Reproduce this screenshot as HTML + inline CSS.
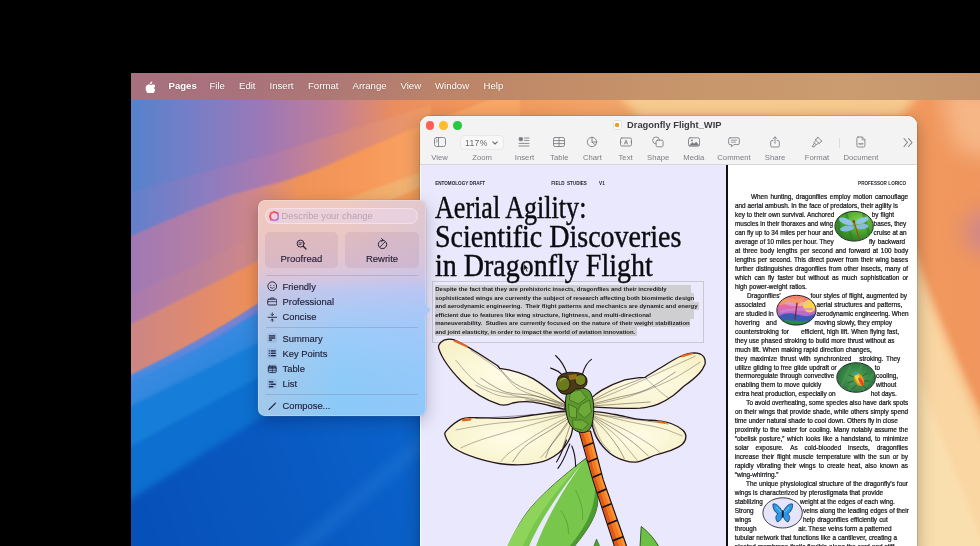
<!DOCTYPE html>
<html>
<head>
<meta charset="utf-8">
<style>
*{margin:0;padding:0;box-sizing:border-box}
html,body{width:980px;height:546px;overflow:hidden;background:#000;font-family:"Liberation Sans",sans-serif}
#win,#pop,#menubar{will-change:transform}
#winin{position:absolute;left:.5px;top:0;width:496.5px;height:100%}
#stage{position:absolute;left:0;top:0;width:980px;height:546px;overflow:hidden;background:#000}
#desk{position:absolute;left:131px;top:73px;width:849px;height:473px;overflow:hidden}
#desk svg{position:absolute;left:0;top:0}
/* menubar */
#menubar{position:absolute;left:131px;top:73px;width:849px;height:26.500px;background:linear-gradient(90deg,#a6707e 0%,#a9727b 12%,#ae7876 24%,#bb8369 36%,#c28c68 50%,#c8976b 68%,#ca9c70 85%,#c6946c 100%)}
#menubar span{position:absolute;top:0;line-height:25.800px;color:#fff;font-size:9.6px;white-space:nowrap;text-shadow:0 0 2px rgba(0,0,0,.25)}
/* window */
#win{position:absolute;left:420px;top:116px;width:497px;height:440px;border-radius:9px 9px 0 0;background:#fff;overflow:hidden;box-shadow:0 0 0 .5px rgba(0,0,0,.22),0 5px 18px rgba(0,0,0,.3)}
#tbar{position:absolute;left:-.5px;top:0;width:497px;height:48.5px;background:#f4f3f4;border-bottom:.8px solid #d8d6da}
.tl{position:absolute;top:5px;width:8.6px;height:8.6px;border-radius:50%}
.tlab{margin-left:.7px;position:absolute;top:36.5px;font-size:7.7px;color:#7d7b80;white-space:nowrap;transform:translateX(-50%);line-height:9px}
.tico{margin-left:.7px;position:absolute;top:20px;transform:translateX(-50%)}
#lpage{position:absolute;left:0;top:49px;width:305.5px;height:400px;background:#e9e8fc}
#divider{position:absolute;left:305px;top:49px;width:2px;height:400px;background:#111}
#rpage{position:absolute;left:307px;top:49px;width:190px;height:400px;background:#fff}
/* popup */
#pop{position:absolute;left:258px;top:200px;width:167.5px;height:215.5px;border-radius:7px;background:linear-gradient(90deg,rgba(245,195,180,.22) 0%,rgba(220,200,220,0) 50%,rgba(170,190,255,.2) 100%),linear-gradient(180deg,#efcac1 0%,#ebc8c5 14%,#e2c6d2 28%,#d4c6e2 36%,#bcc7f0 42%,#a9caf6 52%,#9ccbf8 62%,#8fcbf9 80%,#8ac9f9 100%);box-shadow:inset 0 0 0 .7px rgba(255,255,255,.3),0 0 0 .5px rgba(120,120,150,.3),0 5px 16px rgba(0,0,30,.25)}
.pi{-webkit-text-stroke:.15px currentColor;position:absolute;left:24.5px;font-size:9.4px;color:#23233c;white-space:nowrap;line-height:12px}
.psep{position:absolute;left:8px;width:152px;height:.8px;background:rgba(110,110,140,.28)}
.pico{position:absolute;left:8px}

.hd{position:absolute;font-size:4.600px;font-weight:bold;color:#26252c;line-height:6px;white-space:nowrap;text-align:justify;text-align-last:justify;letter-spacing:0}
.ttl{-webkit-text-stroke:.45px #0c0c10;position:absolute;z-index:2;font-family:"Liberation Serif",serif;font-size:32.500px;line-height:1;color:#0c0c10;white-space:nowrap;transform-origin:0 0;letter-spacing:0}
.pb{position:absolute;font-size:6.030px;font-weight:bold;color:#1c1c22;line-height:8px;white-space:nowrap;text-align:justify;text-align-last:justify;overflow:visible}
.rt{position:absolute;font-size:6.400px;color:#18181c;line-height:9px;white-space:nowrap;text-align:justify;text-align-last:justify;-webkit-text-stroke:.22px #18181c}
</style>
</head>
<body>
<div id="stage">
<div id="desk">
<svg width="849" height="473" viewBox="131 73 849 473">
<defs>
<linearGradient id="g0" x1="131" y1="0" x2="980" y2="0" gradientUnits="userSpaceOnUse">
<stop offset="0" stop-color="#5682cc"/><stop offset=".08" stop-color="#7a7ec6"/><stop offset=".155" stop-color="#9c78b6"/><stop offset=".235" stop-color="#bf7e9a"/><stop offset=".31" stop-color="#ea8e60"/><stop offset=".4" stop-color="#f3965a"/><stop offset=".55" stop-color="#f3a468"/><stop offset=".75" stop-color="#f4a466"/><stop offset=".9" stop-color="#f29a5e"/><stop offset="1" stop-color="#f0965e"/>
</linearGradient>
<linearGradient id="g1" x1="131" y1="0" x2="431" y2="0" gradientUnits="userSpaceOnUse">
<stop offset="0" stop-color="#6280cc"/><stop offset=".25" stop-color="#8c7cc0"/><stop offset=".47" stop-color="#ae7aac"/><stop offset=".72" stop-color="#d6887e"/><stop offset="1" stop-color="#f29c62"/>
</linearGradient>
<linearGradient id="g2" x1="131" y1="0" x2="431" y2="0" gradientUnits="userSpaceOnUse">
<stop offset="0" stop-color="#a079b4"/><stop offset=".22" stop-color="#b47ea4"/><stop offset=".42" stop-color="#d08888"/><stop offset=".56" stop-color="#f09358"/><stop offset=".78" stop-color="#f6995a"/><stop offset="1" stop-color="#f9a666"/>
</linearGradient>
<linearGradient id="g3" x1="131" y1="0" x2="431" y2="0" gradientUnits="userSpaceOnUse">
<stop offset="0" stop-color="#aa7aae"/><stop offset=".25" stop-color="#be8298"/><stop offset=".43" stop-color="#d28a84"/><stop offset=".62" stop-color="#ee965e"/><stop offset=".75" stop-color="#f3aa68"/><stop offset="1" stop-color="#f0b676"/>
</linearGradient>
<linearGradient id="g4" x1="131" y1="0" x2="431" y2="0" gradientUnits="userSpaceOnUse">
<stop offset="0" stop-color="#cc8684"/><stop offset=".2" stop-color="#de8a72"/><stop offset=".42" stop-color="#f09058"/><stop offset="1" stop-color="#f6a05a"/>
</linearGradient>
<linearGradient id="g5" x1="170" y1="330" x2="300" y2="546" gradientUnits="userSpaceOnUse">
<stop offset="0" stop-color="#5a8fe2"/><stop offset=".1" stop-color="#3a8ae0"/><stop offset=".3" stop-color="#2484dc"/><stop offset="1" stop-color="#2484dc"/>
</linearGradient>
<linearGradient id="gpb" x1="131" y1="0" x2="431" y2="0" gradientUnits="userSpaceOnUse"><stop offset="0" stop-color="#5a8ce0" stop-opacity=".3"/><stop offset=".25" stop-color="#7a82d4"/><stop offset=".5" stop-color="#8e80cc"/><stop offset="1" stop-color="#9a86d0"/></linearGradient>
<filter color-interpolation-filters="sRGB" id="b1" x="-5%" y="-5%" width="110%" height="110%"><feGaussianBlur stdDeviation="0.8"/></filter>
<linearGradient id="g6" x1="131" y1="546" x2="421" y2="440" gradientUnits="userSpaceOnUse"><stop offset="0" stop-color="#0650b8"/><stop offset=".55" stop-color="#0959c1"/><stop offset="1" stop-color="#0b63cb"/></linearGradient>
<filter color-interpolation-filters="sRGB" id="b2" x="-5%" y="-5%" width="110%" height="110%"><feGaussianBlur stdDeviation="1.6"/></filter>
<filter color-interpolation-filters="sRGB" id="b3" x="-5%" y="-5%" width="110%" height="110%"><feGaussianBlur stdDeviation="3"/></filter>
<filter color-interpolation-filters="sRGB" id="b4" x="-10%" y="-10%" width="120%" height="120%"><feGaussianBlur stdDeviation="5"/></filter>
<filter color-interpolation-filters="sRGB" id="b8" x="-10%" y="-10%" width="120%" height="120%"><feGaussianBlur stdDeviation="10"/></filter>
</defs>
<rect x="100" y="40" width="900" height="540" fill="url(#g0)"/>
<g filter="url(#b1)">
<polygon points="100,201 131,192 271,154 431,105 431,560 100,560" fill="url(#g1)"/>
<path d="M100,250 L131,236 C170,219 200,206 231,195 C255,188 275,184 292,178.600 C320,169 340,160 353,154 C380,142 400,134 421,125.500 L520,88 L520,560 L100,560Z" fill="url(#g2)"/>
<path d="M100,311 L131,296 L258,235 Q300,216 345,199 L421,172.500 L470,156 L470,560 L100,560Z" fill="url(#g3)"/>
<polygon points="100,340 131,324 258,261 431,182 431,560 100,560" fill="url(#g4)"/>
<path d="M100,394 L131,375 Q200,342 258,304 L431,200 L431,580 L100,580 Z" fill="url(#g5)"/>
</g>
<clipPath id="cpb"><path d="M100,394 L131,375 Q200,342 258,304 L431,200 L431,580 L100,580 Z"/></clipPath>
<g clip-path="url(#cpb)"><path d="M100,394 L131,375 Q200,342 258,304 L431,200" fill="none" stroke="url(#gpb)" stroke-width="13" filter="url(#b2)" opacity=".85"/></g>
<g filter="url(#b2)">
<polygon points="100,421 131,406 259,343 431,255 431,600 100,600" fill="#167dd8"/>
<polygon points="100,462 131,446 259,377 431,290 431,600 100,600" fill="#0d70d0"/>
</g>
<g filter="url(#b3)">
<path d="M100,519 L131,499 L257,420 Q340,370 431,325 L431,600 L100,600 Z" fill="url(#g6)"/>
</g>
<g filter="url(#b4)">
<polygon points="275,560 425,430 431,445 300,560" fill="#2a80dc" opacity=".3"/>
<polygon points="585,60 945,60 900,118 640,118" fill="#f8d49a" opacity=".8"/>
</g>
<g filter="url(#b8)">
<polygon points="940,90 1000,90 1000,160 955,150" fill="#f8be90" opacity=".8"/>
<circle cx="985" cy="232" r="22" fill="#cc8490" opacity=".8"/>
</g>
<g filter="url(#b3)">
<path d="M900,205 L917,255 Q935,314 1000,455 L1000,600 L900,600Z" fill="#f8c690"/>
<path d="M900,232 L917,276 Q942,345 1000,480 L1000,600 L900,600Z" fill="#f9d6a2"/>
<path d="M900,330 L917,370 Q942,440 990,560 L1000,600 L900,600Z" fill="#fadfae"/>
</g>
</svg>
</div>

<div id="menubar">
<span style="left:13px;font-size:12px"></span>
<svg style="position:absolute;left:13.5px;top:7.5px" width="10" height="12" viewBox="0 0 170 200"><path fill="#fff" d="M150 152c-3 8-7 15-12 22-6 9-12 16-16 19-6 6-13 9-20 9-5 0-11-1-18-4s-14-4-20-4-13 1-20 4-13 5-17 5c-7 0-14-3-21-9-4-4-10-11-17-21C-18 162-24 149-28 135-33 119-35 104-35 89c0-17 4-31 11-43 6-10 13-17 23-23s20-9 31-9c6 0 14 2 24 6s16 6 19 6c2 0 9-2 22-7 12-4 21-6 29-5 21 2 37 10 48 25-19 11-28 27-28 48 0 16 6 29 18 40 5 5 11 9 18 12-1 4-3 8-5 12zM102-44c0 12-5 24-14 35-11 13-24 20-38 19 0-1 0-3 0-5 0-12 5-25 14-35 5-5 10-10 18-13 7-4 14-6 21-6 0 2 0 3 0 5z" transform="translate(40,46) scale(.82)"/></svg>
<span style="left:37.5px;font-weight:bold">Pages</span>
<span style="left:78.5px">File</span>
<span style="left:108px">Edit</span>
<span style="left:138.5px">Insert</span>
<span style="left:177px">Format</span>
<span style="left:221.5px">Arrange</span>
<span style="left:269.5px">View</span>
<span style="left:304px">Window</span>
<span style="left:352.5px">Help</span>
</div>

<div id="win">
<div id="winin">
<div id="tbar">
<div class="tl" style="left:5.5px;background:#fe5f57"></div>
<div class="tl" style="left:19.3px;background:#febc2e"></div>
<div class="tl" style="left:33.1px;background:#28c840"></div>
<div style="position:absolute;left:194px;top:5px;width:6.5px;height:8px;border-radius:1.5px;background:#fff;box-shadow:0 0 0 .4px #ccc"><div style="position:absolute;left:1.2px;top:2px;width:4px;height:4px;border-radius:1px;background:#f59a23"></div></div>
<div style="position:absolute;left:207px;top:3.2px;font-size:9.35px;font-weight:bold;color:#3c3a3e;line-height:12px;white-space:nowrap">Dragonfly Flight_WIP</div>
<svg class="tico" style="left:18.9px;top:20px" width="13" height="12" viewBox="0 0 13 12" fill="none" stroke="#817f85" stroke-width=".9" stroke-linecap="round" stroke-linejoin="round"><rect x="1" y="1.5" width="11" height="9" rx="2"/><line x1="5" y1="1.5" x2="5" y2="10.5"/><line x1="2.6" y1="4" x2="3.6" y2="4" stroke-width=".8"/><line x1="2.6" y1="5.8" x2="3.6" y2="5.8" stroke-width=".8"/></svg>
<div class="tlab" style="left:18.9px">View</div>
<div style="position:absolute;left:40.5px;top:20.3px;width:42.5px;height:12.6px;border-radius:3px;background:#f8f7f8;box-shadow:0 0 0 .5px #dddbe0"></div><div style="position:absolute;left:45px;top:21.5px;font-size:8.6px;color:#6d6b70;line-height:10px;letter-spacing:.35px">117%</div><svg style="position:absolute;left:71.5px;top:24.5px" width="6" height="4" viewBox="0 0 6 4" fill="none" stroke="#6d6b70" stroke-width="1.1" stroke-linecap="round" stroke-linejoin="round"><path d="M.8.8 3 3 5.2.8"/></svg><div class="tlab" style="left:61.4px">Zoom</div>
<svg class="tico" style="left:103.8px;top:20px" width="13" height="12" viewBox="0 0 13 12" fill="none" stroke="#817f85" stroke-width=".9" stroke-linecap="round" stroke-linejoin="round"><rect x="1.6" y="1.6" width="3.6" height="3.2" rx=".8" fill="#7a787d" stroke-width=".6"/><line x1="7" y1="2" x2="11.5" y2="2"/><line x1="7" y1="4.4" x2="11.5" y2="4.4"/><line x1="1.5" y1="7.4" x2="11.5" y2="7.4"/><line x1="1.5" y1="10" x2="11.5" y2="10"/></svg>
<div class="tlab" style="left:103.8px">Insert</div>
<svg class="tico" style="left:138.6px;top:20px" width="13" height="12" viewBox="0 0 13 12" fill="none" stroke="#817f85" stroke-width=".9" stroke-linecap="round" stroke-linejoin="round"><rect x="1" y="1.5" width="11" height="9" rx="1.6"/><line x1="1" y1="4.6" x2="12" y2="4.6"/><line x1="1" y1="7.6" x2="12" y2="7.6"/><line x1="6.5" y1="1.5" x2="6.5" y2="10.5"/></svg>
<div class="tlab" style="left:138.6px">Table</div>
<svg class="tico" style="left:171.7px;top:20px" width="13" height="12" viewBox="0 0 13 12" fill="none" stroke="#817f85" stroke-width=".9" stroke-linecap="round" stroke-linejoin="round"><circle cx="6.5" cy="6" r="4.7"/><path d="M6.5 1.3V6L10 9"/><path d="M6.5 6h4.6"/></svg>
<div class="tlab" style="left:171.7px">Chart</div>
<svg class="tico" style="left:204.9px;top:20px" width="13" height="12" viewBox="0 0 13 12" fill="none" stroke="#817f85" stroke-width=".9" stroke-linecap="round" stroke-linejoin="round"><rect x="1" y="2" width="11" height="8" rx="1.4"/><path d="M5 8 6.5 4 8 8M5.5 6.9h2" stroke-width=".8"/><line x1="1" y1="6" x2="1.8" y2="6" stroke-width=".7"/><line x1="11.2" y1="6" x2="12" y2="6" stroke-width=".7"/></svg>
<div class="tlab" style="left:204.9px">Text</div>
<svg class="tico" style="left:237.5px;top:20px" width="13" height="12" viewBox="0 0 13 12" fill="none" stroke="#817f85" stroke-width=".9" stroke-linecap="round" stroke-linejoin="round"><rect x="4.6" y="4.2" width="7" height="6.6" rx="1.3"/><path d="M4.3 7.9A3.5 3.5 0 1 1 8.1 4"/></svg>
<div class="tlab" style="left:237.5px">Shape</div>
<svg class="tico" style="left:273.1px;top:20px" width="13" height="12" viewBox="0 0 13 12" fill="none" stroke="#817f85" stroke-width=".9" stroke-linecap="round" stroke-linejoin="round"><rect x="1" y="1.8" width="11" height="8.4" rx="1.6"/><path d="M1.8 9.4 4.8 6.4 6.6 8 8.6 6 11.4 9.2Z" fill="#7a787d" stroke-width=".5"/><circle cx="4.4" cy="4.4" r=".9" fill="#7a787d" stroke="none"/></svg>
<div class="tlab" style="left:273.1px">Media</div>
<svg class="tico" style="left:313.3px;top:20px" width="13" height="12" viewBox="0 0 13 12" fill="none" stroke="#817f85" stroke-width=".9" stroke-linecap="round" stroke-linejoin="round"><path d="M2.6 1.8h7.8a1.4 1.4 0 0 1 1.4 1.4v4a1.4 1.4 0 0 1-1.4 1.4H6.2L4 10.8V8.6H2.6A1.4 1.4 0 0 1 1.2 7.200V3.200A1.400 1.400 0 0 1 2.600 1.800Z"/><line x1="4" y1="4.200" x2="9" y2="4.200" stroke-width=".8"/><line x1="4" y1="6.200" x2="8" y2="6.200" stroke-width=".8"/></svg>
<div class="tlab" style="left:313.3px">Comment</div>
<svg class="tico" style="left:354.4px;top:20px" width="13" height="12" viewBox="0 0 13 12" fill="none" stroke="#817f85" stroke-width=".9" stroke-linecap="round" stroke-linejoin="round"><path d="M4.400 4.600H3.400A1.200 1.200 0 0 0 2.200 5.800V9.800A1.200 1.200 0 0 0 3.400 11H9.600A1.200 1.200 0 0 0 10.800 9.800V5.800A1.200 1.200 0 0 0 9.600 4.600H8.600"/><path d="M6.500 7.400V1M4.600 2.700 6.500.9 8.400 2.700"/></svg>
<div class="tlab" style="left:354.4px">Share</div>
<svg class="tico" style="left:396.2px;top:20px" width="13" height="12" viewBox="0 0 13 12" fill="none" stroke="#817f85" stroke-width=".9" stroke-linecap="round" stroke-linejoin="round"><path d="M7.300 1.200 11.400 5.300 9.600 6.200 8.800 7.700 4.600 3.700 6.300 2.900Z"/><path d="M5.200 4.600 3.400 6.400 6 9 7.800 7.200"/><path d="M4 7.200 1.600 10.600 3.600 11 5.400 8.600"/></svg>
<div class="tlab" style="left:396.2px">Format</div>
<div style="position:absolute;left:418.5px;top:22px;width:.7px;height:10px;background:#dcdade"></div><svg class="tico" style="left:440.3px;top:20px" width="13" height="12" viewBox="0 0 13 12" fill="none" stroke="#817f85" stroke-width=".9" stroke-linecap="round" stroke-linejoin="round"><path d="M3.600 1H7.800L10.400 3.600V9.800A1.200 1.200 0 0 1 9.200 11H3.600A1.200 1.200 0 0 1 2.400 9.800V2.200A1.200 1.200 0 0 1 3.600 1Z"/><path d="M7.600 1.200V3.800H10.200" stroke-width=".8"/><line x1="4.400" y1="7.800" x2="8.400" y2="7.800" stroke-width="1.300"/></svg>
<div class="tlab" style="left:440.3px">Document</div>
<svg class="tico" style="left:487.2px;top:21px" width="11" height="11" viewBox="0 0 11 11" fill="none" stroke="#817f85" stroke-width=".9" stroke-linecap="round" stroke-linejoin="round"><path d="M1.500 1.500 5 5.500 1.500 9.500M6 1.500 9.500 5.500 6 9.500" stroke-width="1.100"/></svg>

</div>
<div id="lpage"><div class="hd" style="left:14.7px;top:15.5px;width:50px">ENTOMOLOGY DRAFT</div>
<div class="hd" style="left:130.8px;top:15.5px;width:35.600px">FIELD STUDIES</div>
<div class="hd" style="left:178.6px;top:15.5px;width:4.600px">V1</div>
<div class="ttl" style="left:14.6px;top:26.28px;transform:scaleX(0.8025)">Aerial Agility:</div>
<div class="ttl" style="left:14.6px;top:54.98px;transform:scaleX(0.8613)">Scientific Discoveries</div>
<div class="ttl" style="left:14.6px;top:83.98px;transform:scaleX(0.8613)">in Dragonfly Flight</div>
<div style="position:absolute;left:11.6px;top:116.3px;width:271.700px;height:61.300px;border:.6px solid #c9c8d2;background:rgba(255,255,255,.12)"></div>
<div style="position:absolute;left:14.6px;top:119.60px;width:255.7px;height:8.900px;background:#cfcfd1"></div>
<div style="position:absolute;left:14.6px;top:128.10px;width:258.7px;height:8.900px;background:#cfcfd1"></div>
<div style="position:absolute;left:14.6px;top:136.60px;width:263.7px;height:8.900px;background:#cfcfd1"></div>
<div style="position:absolute;left:14.6px;top:145.10px;width:258.7px;height:8.900px;background:#cfcfd1"></div>
<div style="position:absolute;left:14.6px;top:153.60px;width:254.9px;height:8.900px;background:#cfcfd1"></div>
<div style="position:absolute;left:14.6px;top:162.10px;width:202.4px;height:8.900px;background:#cfcfd1"></div>
<div class="pb" style="left:14.7px;top:120.00px;width:231.5px">Despite the fact that they are prehistoric insects, dragonflies and their incredibly</div>
<div class="pb" style="left:14.7px;top:128.50px;width:258.2px">sophisticated wings are currently the subject of research affecting both biomimetic design</div>
<div class="pb" style="left:14.7px;top:137.00px;width:259.9px">and aerodynamic engineering.&nbsp; Their flight patterns and mechanics are dynamic and energy</div>
<div class="pb" style="left:14.7px;top:145.50px;width:215.7px">efficient due to features like wing structure, lightness, and multi-directional</div>
<div class="pb" style="left:14.7px;top:154.00px;width:254.6px">maneuverability.&nbsp; Studies are currently focused on the nature of their weight stabilization</div>
<div class="pb" style="left:14.7px;top:162.50px;width:200.2px">and joint elasticity, in order to impact the world of aviation innovation.</div>
<svg style="position:absolute;left:0;top:0" width="306" height="400" viewBox="420.5 165 306 400">
<defs><radialGradient id="wg" cx=".5" cy=".5" r=".6"><stop offset="0" stop-color="#fffce6"/><stop offset="1" stop-color="#f6f1c8"/></radialGradient></defs>
<path d="M585.1,458.500 C592,470 599,488 597,505 C594,522 582,536 571,550 L506,550 C512,536 520,520 530,508 C545,490 570,470 585.1,458.500Z" fill="#78c74c" stroke="#1f3a14" stroke-width=".8"/>
<path d="M597,505 C594,522 582,536 571,550 L566,550 C578,536 590,520 593.5,500 C595,492 595,484 593.5,476 C596,486 598,496 597,505Z" fill="#4c9a30"/>
<path d="M583,461 C565,474 540,495 527,512 C518,524 510,538 505,550 L521,550 C528,530 550,495 583,461Z" fill="#8fd45a"/>
<path d="M582,463 C560,490 538,522 527,550 L534,550 C545,520 562,490 582,463Z" fill="#eae8fb"/>
<path d="M575,490 C580,500 583,510 582,520M560,510 C566,518 568,526 568,534" fill="none" stroke="#3c8a22" stroke-width=".5"/>
<path d="M639.5,547 L640.7,526.5 C648,532 655,540 659,548Z" fill="#6cc044" stroke="#1f3a14" stroke-width=".8"/>
<path d="M593,547 L596,539 L599.500,547Z" fill="#4ea32e" stroke="#1f3a14" stroke-width=".5"/>
<path d="M564.600,403 C555,395 545,386 532.600,378.600 C520,372 508,369.500 499.200,368.300 L497.500,366 C485,358 470,347 453,339.600 C449,338.500 444,339.500 442.800,340.600 C438,343 437.500,347 438.500,349.100 C441,357 450,370 460.800,381.200 C470,390 482,399 499.200,404.700 C505,406 510,404 512.100,403 C520,401.500 528,401.500 532.600,402.200 C545,404 556,408 564.600,409.400 Z" fill="url(#wg)" stroke="#24161c" stroke-width="1.300" stroke-linejoin="round"/>
<path d="M569.7,411.2 C563.1,410.0 543.1,413.8 532.6,415.0 C522.1,416.2 516.7,417.9 506.9,418.3 C497.1,418.7 481.3,417.5 473.6,417.6 C465.9,417.7 465.3,417.1 460.8,419.1 C456.3,421.2 449.4,427.0 446.7,429.9 C444.0,432.8 443.8,433.3 444.9,436.3 C446.0,439.3 447.9,444.2 453.1,447.8 C458.3,451.4 467.2,455.3 476.2,458.1 C485.2,460.9 496.6,463.7 506.9,464.5 C517.1,465.3 529.2,464.6 537.7,462.7 C546.2,460.8 552.9,457.1 558.2,452.9 C563.5,448.7 567.4,442.7 569.7,437.6 C572.1,432.5 572.3,426.6 572.3,422.2 C572.3,417.8 576.3,412.4 569.7,411.2 Z" fill="url(#wg)" stroke="#24161c" stroke-width="1.300" stroke-linejoin="round"/>
<path d="M589.700,399.100 C594,395 598,392 601.300,390.100 C610,385 618,382 624.400,379.900 C632,378 640,377.500 644.900,377.300 L646.500,376 C653,372 660,368 665.400,364.500 C671,361 676,358 680.800,356 C686,354 690,353 693.600,352.900 C698,353 701.500,354.500 703.300,356.800 C705,359.500 705,362 704.400,364.500 C703,368 701,371 698.700,373.500 C694,378.500 688,383 683.300,386.300 C680,389.500 676.500,392.500 673.100,395.300 C668,399 663,402 657.700,404.200 C652,406.500 646,407.500 639.700,408.100 C631,408.500 622,408.300 614.100,408.100 C606,407.800 599,407.300 592.300,406.800 Z" fill="url(#wg)" stroke="#24161c" stroke-width="1.300" stroke-linejoin="round"/>
<path d="M591.0,411.9 C594.9,410.6 606.4,413.3 614.1,414.5 C621.8,415.7 629.9,418.0 637.2,419.1 C644.5,420.2 652.2,420.2 657.7,420.9 C663.2,421.6 666.4,422.0 670.5,423.5 C674.6,425.0 679.6,427.8 682.1,429.9 C684.6,432.0 685.4,433.9 685.4,436.3 C685.4,438.7 684.6,441.6 682.1,444.0 C679.6,446.4 675.0,448.6 670.5,450.4 C666.0,452.2 660.6,453.1 655.1,455.0 C649.6,456.9 642.3,461.0 637.2,461.9 C632.1,462.8 629.1,462.1 624.4,460.6 C619.7,459.1 613.7,456.7 609.0,452.9 C604.3,449.1 599.2,442.7 596.2,437.6 C593.2,432.5 591.9,426.5 591.0,422.2 C590.1,417.9 587.1,413.2 591.0,411.9 Z" fill="url(#wg)" stroke="#24161c" stroke-width="1.300" stroke-linejoin="round"/>
<path d="M564.0,404.0 C556.7,401.7 530.8,395.7 520.0,390.0 C509.2,384.3 507.3,376.7 499.0,370.0 C490.7,363.3 474.8,353.3 470.0,350.0" fill="none" stroke="#3a2a28" stroke-width=".45" opacity=".8"/>
<path d="M564.0,406.0 C556.7,404.5 534.0,400.5 520.0,397.0 C506.0,393.5 490.8,391.2 480.0,385.0 C469.2,378.8 459.2,364.2 455.0,360.0" fill="none" stroke="#3a2a28" stroke-width=".45" opacity=".8"/>
<path d="M560.0,407.0 C555.0,405.5 540.0,399.8 530.0,398.0 C520.0,396.2 509.2,398.2 500.0,396.0 C490.8,393.8 479.2,386.8 475.0,385.0" fill="none" stroke="#3a2a28" stroke-width=".45" opacity=".8"/>
<path d="M569.0,413.0 C562.5,414.2 543.2,418.2 530.0,420.0 C516.8,421.8 502.5,422.3 490.0,424.0 C477.5,425.7 460.8,429.0 455.0,430.0" fill="none" stroke="#3a2a28" stroke-width=".45" opacity=".8"/>
<path d="M569.0,416.0 C564.2,418.7 549.8,426.0 540.0,432.0 C530.2,438.0 516.7,447.0 510.0,452.0 C503.3,457.0 501.7,460.3 500.0,462.0" fill="none" stroke="#3a2a28" stroke-width=".45" opacity=".8"/>
<path d="M570.0,420.0 C567.5,423.3 560.0,433.7 555.0,440.0 C550.0,446.3 542.5,455.0 540.0,458.0" fill="none" stroke="#3a2a28" stroke-width=".45" opacity=".8"/>
<path d="M568.0,414.0 C560.0,416.3 534.7,423.7 520.0,428.0 C505.3,432.3 490.0,436.7 480.0,440.0 C470.0,443.3 463.3,446.7 460.0,448.0" fill="none" stroke="#3a2a28" stroke-width=".45" opacity=".8"/>
<path d="M591.0,402.0 C596.7,399.7 613.5,393.0 625.0,388.0 C636.5,383.0 648.3,377.3 660.0,372.0 C671.7,366.7 689.2,358.7 695.0,356.0" fill="none" stroke="#3a2a28" stroke-width=".45" opacity=".8"/>
<path d="M591.0,405.0 C597.5,403.5 616.8,400.2 630.0,396.0 C643.2,391.8 658.3,385.7 670.0,380.0 C681.7,374.3 695.0,365.0 700.0,362.0" fill="none" stroke="#3a2a28" stroke-width=".45" opacity=".8"/>
<path d="M645.0,378.0 C647.5,380.3 656.2,388.7 660.0,392.0 C663.8,395.3 666.7,397.0 668.0,398.0" fill="none" stroke="#3a2a28" stroke-width=".45" opacity=".8"/>
<path d="M592.0,413.0 C598.3,414.5 618.7,419.5 630.0,422.0 C641.3,424.5 651.3,425.7 660.0,428.0 C668.7,430.3 678.3,434.7 682.0,436.0" fill="none" stroke="#3a2a28" stroke-width=".45" opacity=".8"/>
<path d="M592.0,417.0 C595.8,420.0 608.7,429.2 615.0,435.0 C621.3,440.8 626.3,447.7 630.0,452.0 C633.7,456.3 635.8,459.5 637.0,461.0" fill="none" stroke="#3a2a28" stroke-width=".45" opacity=".8"/>
<path d="M592.0,415.0 C597.5,417.5 615.3,425.0 625.0,430.0 C634.7,435.0 644.2,441.2 650.0,445.0 C655.8,448.8 658.3,451.7 660.0,453.0" fill="none" stroke="#3a2a28" stroke-width=".45" opacity=".8"/>
<path d="M592.0,420.0 C593.3,423.3 597.0,434.7 600.0,440.0 C603.0,445.3 608.3,450.0 610.0,452.0" fill="none" stroke="#3a2a28" stroke-width=".45" opacity=".8"/>
<path d="M565.0,405.0 C560.8,403.2 548.3,397.5 540.0,394.0 C531.7,390.5 522.1,388.6 515.0,384.0 C507.9,379.4 500.4,369.4 497.5,366.5" fill="none" stroke="#2a1c20" stroke-width=".5" opacity=".85"/>
<path d="M565.0,407.5 C561.7,406.6 551.7,403.2 545.0,402.0 C538.3,400.8 528.3,400.3 525.0,400.0" fill="none" stroke="#2a1c20" stroke-width=".5" opacity=".85"/>
<path d="M565.0,406.0 C560.0,404.3 545.0,398.3 535.0,396.0 C525.0,393.7 514.2,395.0 505.0,392.0 C495.8,389.0 484.2,380.3 480.0,378.0" fill="none" stroke="#2a1c20" stroke-width=".5" opacity=".85"/>
<path d="M569.0,412.0 C565.0,412.2 554.0,412.8 545.0,413.5 C536.0,414.2 526.7,415.2 515.0,416.0 C503.3,416.8 481.7,418.1 475.0,418.5" fill="none" stroke="#2a1c20" stroke-width=".5" opacity=".85"/>
<path d="M570.0,418.0 C568.3,420.3 563.3,427.3 560.0,432.0 C556.7,436.7 552.5,441.7 550.0,446.0 C547.5,450.3 545.8,456.0 545.0,458.0" fill="none" stroke="#2a1c20" stroke-width=".5" opacity=".85"/>
<path d="M570.0,417.0 C566.7,419.2 557.5,425.2 550.0,430.0 C542.5,434.8 531.3,440.7 525.0,446.0 C518.7,451.3 514.2,459.3 512.0,462.0" fill="none" stroke="#2a1c20" stroke-width=".5" opacity=".85"/>
<path d="M571.0,421.0 C570.2,423.5 567.5,431.5 566.0,436.0 C564.5,440.5 562.7,446.0 562.0,448.0" fill="none" stroke="#2a1c20" stroke-width=".5" opacity=".85"/>
<path d="M591.0,401.0 C594.5,399.2 604.7,393.3 612.0,390.0 C619.3,386.7 629.3,383.2 635.0,381.0 C640.7,378.8 644.2,377.2 646.0,376.5" fill="none" stroke="#2a1c20" stroke-width=".5" opacity=".85"/>
<path d="M591.0,404.0 C595.0,403.0 606.0,400.3 615.0,398.0 C624.0,395.7 635.0,394.3 645.0,390.0 C655.0,385.7 670.0,375.0 675.0,372.0" fill="none" stroke="#2a1c20" stroke-width=".5" opacity=".85"/>
<path d="M591.0,406.0 C595.8,405.7 610.2,404.7 620.0,404.0 C629.8,403.3 645.0,402.3 650.0,402.0" fill="none" stroke="#2a1c20" stroke-width=".5" opacity=".85"/>
<path d="M592.0,414.0 C596.7,414.6 610.3,416.2 620.0,417.5 C629.7,418.8 642.0,420.4 650.0,421.5 C658.0,422.6 665.0,423.6 668.0,424.0" fill="none" stroke="#2a1c20" stroke-width=".5" opacity=".85"/>
<path d="M592.0,418.0 C594.3,420.3 601.7,427.0 606.0,432.0 C610.3,437.0 615.0,443.5 618.0,448.0 C621.0,452.5 623.0,457.2 624.0,459.0" fill="none" stroke="#2a1c20" stroke-width=".5" opacity=".85"/>
<path d="M592.0,416.0 C595.3,418.0 605.3,423.7 612.0,428.0 C618.7,432.3 626.0,437.3 632.0,442.0 C638.0,446.7 645.3,453.7 648.0,456.0" fill="none" stroke="#2a1c20" stroke-width=".5" opacity=".85"/>
<path d="M592.0,422.0 C592.7,424.3 594.3,432.0 596.0,436.0 C597.7,440.0 601.0,444.3 602.0,446.0" fill="none" stroke="#2a1c20" stroke-width=".5" opacity=".85"/>
<path d="M455,339.800 L468,346.300 L466.500,347.500 L453,341.500Z" fill="#e8631a"/>
<path d="M461,419.200 L471,418 L470.500,420.500 L462,421.500Z" fill="#e8631a"/>
<path d="M680,355.300 L692,352.500 L693,354 L681,357.500Z" fill="#e8631a"/>
<path d="M657,420.600 L666,422 L665.500,423.500 L657,422.500Z" fill="#d8701a"/>
<path d="M566.700,374 C564,366 560,360 555.100,355.500M582,374 C584,367 587,362 591,359.400M562,375 C558,370 554,370 550,368M569.300,444 C566,452 564,460 557.400,468.400M571.300,446 C574,452 575,460 575.200,466.400M566,440 C562,450 560,456 556,462" fill="none" stroke="#1c1216" stroke-width="1.100" stroke-linecap="round"/>
<path d="M578.5,431 L590,431 L602.8,480 L627.5,550 L615.2,550 L592.4,480Z" fill="#f47a20" stroke="#1c1216" stroke-width="1.1" stroke-linejoin="round"/>
<path d="M579.3,432 L582.8,432 L596,480 L619.5,549 L615.8,549 L593,480Z" fill="#d9501a" opacity=".8"/>
<path d="M586.5,432 L589.3,432 L602,480 L626,549 L623.5,549 L599.6,480Z" fill="#f9a040" opacity=".7"/>
<line x1="583.2" y1="446.5" x2="592.8" y2="442.7" stroke="#1c1216" stroke-width="1.7"/>
<line x1="587.6" y1="462.0" x2="596.8" y2="458.2" stroke="#1c1216" stroke-width="1.7"/>
<line x1="592.0" y1="477.5" x2="600.8" y2="473.7" stroke="#1c1216" stroke-width="1.7"/>
<line x1="596.9" y1="492.9" x2="605.7" y2="489.1" stroke="#1c1216" stroke-width="1.7"/>
<line x1="601.7" y1="507.5" x2="610.9" y2="503.7" stroke="#1c1216" stroke-width="1.7"/>
<line x1="607.1" y1="524.1" x2="616.7" y2="520.3" stroke="#1c1216" stroke-width="1.7"/>
<line x1="612.5" y1="540.6" x2="622.6" y2="536.8" stroke="#1c1216" stroke-width="1.7"/>
<path d="M568,389 C575,386 584,387 589,391 C594,398 594,412 592,422 C591,428 588,432 583,432.500 C576,433 570,428 567.500,420 C564,410 564,396 568,389Z" fill="#5d9a2e" stroke="#1c1216" stroke-width="1"/>
<path d="M570,392 L580,390 L586,398 L578,404 L569,400ZM580,405 L589,400 L591,412 L584,418 L577,412ZM568,404 L576,408 L576,418 L569,417ZM572,420 L582,420 L588,424 L582,430 L573,428Z" fill="#6eaa38" stroke="#2c4a18" stroke-width=".5" stroke-linejoin="round"/>
<path d="M557,382 C556,374 566,371.500 574,372.500 C582,372.500 587,376 586.500,382 C586,388 580,389.500 575,389 C570,396 560,396 557.500,389Z" fill="#4b3a12" stroke="#1c1216" stroke-width="1"/>
<ellipse cx="562.800" cy="384" rx="6.800" ry="7.200" fill="#6a7a1a" stroke="#1c1216" stroke-width=".9"/>
<ellipse cx="580" cy="380" rx="5.500" ry="5.500" fill="#76851f" stroke="#1c1216" stroke-width=".9"/>
<path d="M560,381 C561,379 563,378 565,378.500" stroke="#c9d36a" stroke-width=".8" fill="none" stroke-linecap="round"/>
<path d="M568,375 L576,374 L577,379 L569,380Z" fill="#a8801e" opacity=".8"/>
</svg>

<svg style="position:absolute;left:102.1px;top:97.9px;z-index:3" width="6.500" height="9.400" viewBox="0 0 9 13"><path d="M1 1V10.500L3.300 8.400 5 12 6.600 11.300 5 7.800H8Z" fill="#111" stroke="#e8e8ee" stroke-width=".6"/></svg>
</div>
<div id="divider"></div>
<div id="rpage"><div class="hd" style="left:130.6px;top:15.5px;width:48.100px">PROFESSOR LORICO</div>
<div class="rt" style="left:23.5px;top:27.40px;width:157.1px">When hunting, dragonflies employ motion camouflage</div>
<div class="rt" style="left:7.5px;top:36.35px;width:162.9px">and aerial ambush. In the face of predators, their agility is</div>
<div class="rt" style="left:7.5px;top:45.31px;width:99.3px">key to their own survival. Anchored</div>
<div class="rt" style="left:144.2px;top:45.31px;width:22.4px">by flight</div>
<div class="rt" style="left:7.5px;top:54.26px;width:98.1px">muscles in their thoraxes and wing</div>
<div class="rt" style="left:146.1px;top:54.26px;width:32.6px">bases, they</div>
<div class="rt" style="left:7.5px;top:63.21px;width:98.1px">can fly up to 34 miles per hour and</div>
<div class="rt" style="left:146.1px;top:63.21px;width:32.6px">cruise at an</div>
<div class="rt" style="left:7.5px;top:72.17px;width:96.4px">average of 10 miles per hour. They</div>
<div class="rt" style="left:141.4px;top:72.17px;width:36.2px">fly backward</div>
<div class="rt" style="left:7.5px;top:81.12px;width:173.1px">at three body lengths per second and forward at 100 body</div>
<div class="rt" style="left:7.5px;top:90.07px;width:173.1px">lengths per second. This direct power from their wing bases</div>
<div class="rt" style="left:7.5px;top:99.02px;width:173.1px">further distinguishes dragonflies from other insects, many of</div>
<div class="rt" style="left:7.5px;top:107.98px;width:173.1px">which can fly faster but without as much sophistication or</div>
<div class="rt" style="left:7.5px;top:116.93px;width:71.9px">high power-weight ratios.</div>
<div class="rt" style="left:19.5px;top:125.88px;width:34.3px">Dragonflies’</div>
<div class="rt" style="left:83.0px;top:125.88px;width:96.4px">four styles of flight, augmented by</div>
<div class="rt" style="left:7.5px;top:134.84px;width:30.2px">associated</div>
<div class="rt" style="left:89.0px;top:134.84px;width:85.7px">aerial structures and patterns,</div>
<div class="rt" style="left:7.5px;top:143.79px;width:38.6px">are studied in</div>
<div class="rt" style="left:89.0px;top:143.79px;width:91.7px">aerodynamic engineering. When</div>
<div class="rt" style="left:7.5px;top:152.74px;width:41.7px">hovering and</div>
<div class="rt" style="left:87.1px;top:152.74px;width:77.4px">moving slowly, they employ</div>
<div class="rt" style="left:7.5px;top:161.69px;width:54.0px">counterstroking for</div>
<div class="rt" style="left:73.5px;top:161.69px;width:98.1px">efficient, high lift. When flying fast,</div>
<div class="rt" style="left:7.5px;top:170.65px;width:159.5px">they use phased stroking to build more thrust without as</div>
<div class="rt" style="left:7.5px;top:179.60px;width:136.7px">much lift. When making rapid direction changes,</div>
<div class="rt" style="left:7.5px;top:188.55px;width:116.4px">they maximize thrust with synchronized</div>
<div class="rt" style="left:131.8px;top:188.55px;width:41.0px">stroking. They</div>
<div class="rt" style="left:7.5px;top:197.51px;width:101.7px">utilize gliding to free glide updraft or</div>
<div class="rt" style="left:147.3px;top:197.51px;width:5.2px">to</div>
<div class="rt" style="left:7.5px;top:206.46px;width:99.3px">thermoregulate through convective</div>
<div class="rt" style="left:148.5px;top:206.46px;width:21.4px">cooling,</div>
<div class="rt" style="left:7.5px;top:215.41px;width:86.2px">enabling them to move quickly</div>
<div class="rt" style="left:148.5px;top:215.41px;width:21.4px">without</div>
<div class="rt" style="left:7.5px;top:224.37px;width:100.5px">extra heat production, especially on</div>
<div class="rt" style="left:143.3px;top:224.37px;width:24.8px">hot days.</div>
<div class="rt" style="left:18.7px;top:233.32px;width:161.9px">To avoid overheating, some species also have dark spots</div>
<div class="rt" style="left:7.5px;top:242.27px;width:173.1px">on their wings that provide shade, while others simply spend</div>
<div class="rt" style="left:7.3px;top:251.23px;width:163.0px">time under natural shade to cool down. Others fly in close</div>
<div class="rt" style="left:7.3px;top:260.18px;width:173.2px">proximity to the water for cooling. Many notably assume the</div>
<div class="rt" style="left:7.3px;top:269.13px;width:173.2px">“obelisk posture,” which looks like a handstand, to minimize</div>
<div class="rt" style="left:7.3px;top:278.08px;width:173.2px">solar exposure. As cold-blooded insects, dragonflies</div>
<div class="rt" style="left:7.3px;top:287.04px;width:173.2px">increase their flight muscle temperature with the sun or by</div>
<div class="rt" style="left:7.3px;top:295.99px;width:173.2px">rapidly vibrating their wings to create heat, also known as</div>
<div class="rt" style="left:7.3px;top:304.94px;width:46.0px">“wing-whirring.”</div>
<div class="rt" style="left:18.5px;top:313.90px;width:161.9px">The unique physiological structure of the dragonfly’s four</div>
<div class="rt" style="left:7.3px;top:322.85px;width:148.3px">wings is characterized by pterostigmata that provide</div>
<div class="rt" style="left:7.3px;top:331.80px;width:29.4px">stabilizing</div>
<div class="rt" style="left:72.5px;top:331.80px;width:93.5px">weight at the edges of each wing.</div>
<div class="rt" style="left:7.3px;top:340.75px;width:19.2px">Strong</div>
<div class="rt" style="left:75.5px;top:340.75px;width:104.2px">veins along the leading edges of their</div>
<div class="rt" style="left:7.3px;top:349.71px;width:16.6px">wings</div>
<div class="rt" style="left:75.5px;top:349.71px;width:84.7px">help dragonflies efficiently cut</div>
<div class="rt" style="left:7.3px;top:358.66px;width:21.9px">through</div>
<div class="rt" style="left:70.7px;top:358.66px;width:92.7px">air. These veins form a patterned</div>
<div class="rt" style="left:7.3px;top:367.61px;width:162.2px">tubular network that functions like a cantilever, creating a</div>
<div class="rt" style="left:7.3px;top:376.57px;width:159.5px">pleated membrane that’s flexible along the cord and stiff</div>
<svg style="position:absolute;left:0;top:0" width="190" height="400" viewBox="727.500 165 190 400">
<defs>
<radialGradient id="e1" cx=".6" cy=".35" r=".8"><stop offset="0" stop-color="#7fd24a"/><stop offset=".5" stop-color="#3f9a2a"/><stop offset="1" stop-color="#1d5a1c"/></radialGradient>
<linearGradient id="e2" x1="0" y1="0" x2="0" y2="1"><stop offset="0" stop-color="#f48a5a"/><stop offset=".35" stop-color="#e86aa0"/><stop offset=".6" stop-color="#b46ad0"/><stop offset=".8" stop-color="#5a78c8"/><stop offset="1" stop-color="#2a8a5a"/></linearGradient>
<radialGradient id="e3" cx=".5" cy=".5" r=".7"><stop offset="0" stop-color="#5aa85a"/><stop offset=".6" stop-color="#2f7a40"/><stop offset="1" stop-color="#1a4a2a"/></radialGradient>
<clipPath id="c1"><ellipse cx="853.600" cy="226.200" rx="19" ry="14.700"/></clipPath>
<clipPath id="c2"><ellipse cx="795.900" cy="310.200" rx="19.400" ry="14.700"/></clipPath>
<clipPath id="c3"><ellipse cx="855.600" cy="377.500" rx="19.100" ry="14.600"/></clipPath>
</defs>
<g clip-path="url(#c1)"><rect x="830" y="208" width="48" height="36" fill="url(#e1)"/><path d="M836,214 L842,244 M845,210 L852,244 M862,210 L870,240" stroke="#2a7a22" stroke-width="3" opacity=".5"/><ellipse cx="845.500" cy="221.500" rx="7.500" ry="3" fill="#8fc4e8" transform="rotate(22 845.500 221.500)"/><ellipse cx="846.500" cy="228.500" rx="7" ry="2.800" fill="#86b8e0" transform="rotate(-8 846.500 228.500)"/><ellipse cx="861.500" cy="220.500" rx="7" ry="2.700" fill="#8fc4e8" transform="rotate(-22 861.500 220.500)"/><ellipse cx="861.500" cy="226.500" rx="6.500" ry="2.600" fill="#86b8e0" transform="rotate(-5 861.500 226.500)"/><path d="M853.300,221 L858.500,238" stroke="#b4441a" stroke-width="1.100" stroke-linecap="round"/><circle cx="853.200" cy="221.500" r="1.300" fill="#8a3a12"/></g>
<ellipse cx="853.600" cy="226.200" rx="19.200" ry="14.900" fill="none" stroke="#10180c" stroke-width=".9"/>
<g clip-path="url(#c2)"><rect x="775" y="294" width="42" height="34" fill="url(#e2)"/><circle cx="809" cy="306" r="6.500" fill="#fbd24a"/><path d="M775,300 C785,297 795,300 803,298 L803,303 C795,305 785,303 775,306Z" fill="#f6a060" opacity=".8"/><path d="M776,318 C785,310 795,314 803,316 C808,317 812,315 816,313 L816,328 L776,328Z" fill="#3a5ab4"/><path d="M776,322 C786,318 796,322 806,321 L816,320 L816,330 L776,330Z" fill="#2a8a4a"/><path d="M780,312 C790,308 800,310 812,309" stroke="#c88ad8" stroke-width="2.500" fill="none" opacity=".7"/><path d="M796.500,303 L794.500,319" stroke="#7a1c2a" stroke-width="1.100" stroke-linecap="round"/><ellipse cx="790" cy="304" rx="6" ry="1.800" fill="#d8a0d8" opacity=".8" transform="rotate(12 790 304)"/><ellipse cx="803" cy="304" rx="6" ry="1.800" fill="#f0c0a0" opacity=".8" transform="rotate(-12 803 304)"/></g>
<ellipse cx="795.900" cy="310.200" rx="19.600" ry="14.900" fill="none" stroke="#10101c" stroke-width=".9"/>
<g clip-path="url(#c3)"><rect x="835" y="361" width="42" height="34" fill="url(#e3)"/><path d="M838,392 L850,366 M846,394 L862,364 M860,394 L874,372" stroke="#4a9a5a" stroke-width="2.500" opacity=".5"/><ellipse cx="858.500" cy="379.500" rx="4.200" ry="6.800" fill="#f29a1e" transform="rotate(-28 858.500 379.500)"/><ellipse cx="857.300" cy="378.300" rx="2" ry="5.500" fill="#e8e03a" transform="rotate(-28 857.300 378.300)"/><ellipse cx="860.500" cy="381.500" rx="1.600" ry="4.500" fill="#e8442a" transform="rotate(-28 860.500 381.500)"/><circle cx="855" cy="373.500" r="2" fill="#2aa8a0"/><path d="M853,377 L848,375M853,381 L847,383M856,385 L852,389M862,376 L867,373M864,381 L869,381M863,386 L867,390" stroke="#1a2a1a" stroke-width=".5"/></g>
<ellipse cx="855.600" cy="377.500" rx="19.300" ry="14.800" fill="none" stroke="#0c140c" stroke-width=".9"/>
<ellipse cx="782.100" cy="512.900" rx="19.700" ry="15.100" fill="#e6e4fa" stroke="#111" stroke-width=".8"/>
<path d="M781.500,511 C779,506 775,503 772.500,504 C772,508 774,512 777.500,514 C775,515 774.500,519 777,522 C780,521 781.500,518 781.800,515Z" fill="#2a9ae8" stroke="#10284a" stroke-width=".7" stroke-linejoin="round"/>
<path d="M783,511 C785.500,506 789.500,503 792,504 C792.500,508 790.500,512 787,514 C789.500,515 790,519 787.500,522 C784.500,521 783,518 782.700,515Z" fill="#2a9ae8" stroke="#10284a" stroke-width=".7" stroke-linejoin="round"/>
<path d="M776,507 C777,509 779,511 781,512M788.500,507 C787.500,509 785.500,511 783.500,512" stroke="#7fd0ff" stroke-width=".9" fill="none"/>
<ellipse cx="782.250" cy="514" rx=".8" ry="4" fill="#10182a"/>
</svg>

</div>
</div>
</div>

<div id="pop">
<svg style="position:absolute;left:167px;top:101.7px" width="7" height="16" viewBox="0 0 7 16"><path d="M0 0 C0 4 5.5 6.5 5.5 8 C5.5 9.5 0 12 0 16Z" fill="#acc9f6"/></svg>
<div style="position:absolute;left:7px;top:7.700px;width:152.600px;height:16.600px;border-radius:8.300px;background:rgba(235,215,235,.55);box-shadow:inset 0 0 0 1px rgba(255,235,240,.55)"></div>
<svg style="position:absolute;left:10.600px;top:10.800px" width="10.500" height="10.500" viewBox="0 0 20 20"><defs><linearGradient id="ai" x1="0" y1="0" x2="1" y2="1"><stop offset="0" stop-color="#ff7a30"/><stop offset=".35" stop-color="#f2416b"/><stop offset=".7" stop-color="#c86dd7"/><stop offset="1" stop-color="#7d8bf0"/></linearGradient></defs><path d="M10 1.500 13 3 16.500 3.500 17 7 18.500 10 17 13 16.500 16.500 13 17 10 18.500 7 17 3.500 16.500 3 13 1.500 10 3 7 3.500 3.500 7 3Z" fill="none" stroke="url(#ai)" stroke-width="3.400" stroke-linejoin="round"/></svg>
<div style="position:absolute;left:23.600px;top:10px;font-size:9.400px;line-height:12px;color:#b7a2b5;white-space:nowrap" id="ph">Describe your change</div>
<div style="position:absolute;left:7px;top:32px;width:73.3px;height:35.600px;border-radius:5px;background:rgba(150,100,140,.13)"></div>
<div style="position:absolute;left:87px;top:32px;width:73.8px;height:35.600px;border-radius:5px;background:rgba(150,100,140,.13)"></div>
<svg style="position:absolute;left:38.300px;top:38.500px" width="11" height="11" viewBox="0 0 11 11" fill="none" stroke="#2a2238" stroke-width="1" stroke-linecap="round"><circle cx="4.600" cy="4.600" r="3.500"/><line x1="7.300" y1="7.300" x2="10" y2="10" stroke-width="1.300"/><line x1="3" y1="3.800" x2="6.200" y2="3.800" stroke-width=".8"/><line x1="3" y1="5.400" x2="5" y2="5.400" stroke-width=".8"/></svg>
<svg style="position:absolute;left:118.900px;top:38.300px" width="11" height="11.400" viewBox="0 0 11 11.400" fill="none" stroke="#2a2238" stroke-width="1" stroke-linecap="round" stroke-linejoin="round"><path d="M5.500 2.200A4.200 4.200 0 1 1 1.300 6.400 4.200 4.200 0 0 1 5.500 2.200"/><path d="M4.600.6 6.300 2.200 4.600 3.700" stroke-width=".9"/><line x1="3.300" y1="8.500" x2="7.700" y2="4.300" stroke-width=".9"/></svg>
<div class="pi" style="left:43.400px;top:52.700px;transform:translateX(-50%);font-size:9.500px;color:#2a2238" id="pr">Proofread</div>
<div class="pi" style="left:124px;top:52.700px;transform:translateX(-50%);font-size:9.500px;color:#2a2238" id="rw">Rewrite</div>
<div class="psep" style="top:75.300px"></div><div class="psep" style="top:127px"></div><div class="psep" style="top:194px"></div>
<div class="pi" style="top:80.5px">Friendly</div>
<div class="pi" style="top:95.5px">Professional</div>
<div class="pi" style="top:110.9px">Concise</div>
<div class="pi" style="top:132.5px">Summary</div>
<div class="pi" style="top:147.8px">Key Points</div>
<div class="pi" style="top:163.1px">Table</div>
<div class="pi" style="top:178.2px">List</div>
<div class="pi" style="top:200.1px">Compose...</div>

<svg class="pico" style="left:8.800px;margin-top:-.3px;top:81.2px" width="10.600" height="10.600" viewBox="0 0 20 20" fill="none" stroke="#23233c" stroke-width="1.800" stroke-linecap="round" stroke-linejoin="round"><circle cx="10" cy="10" r="8.400"/><circle cx="7" cy="8" r="1.150" fill="#23233c" stroke="none"/><circle cx="13" cy="8" r="1.150" fill="#23233c" stroke="none"/><path d="M6.400 12.400Q10 15.800 13.600 12.400" stroke-width="1.500"/></svg>
<svg class="pico" style="left:8.800px;margin-top:-.3px;top:96.4px" width="10.600" height="10.600" viewBox="0 0 20 20" fill="none" stroke="#23233c" stroke-width="1.800" stroke-linecap="round" stroke-linejoin="round"><rect x="1.400" y="6" width="17.200" height="11" rx="2"/><path d="M7 6V3.600h6V6" stroke-width="1.500"/><path d="M1.400 10.600h17.200" stroke-width="1.400"/></svg>
<svg class="pico" style="left:8.800px;margin-top:-.3px;top:111.8px" width="10.600" height="10.600" viewBox="0 0 20 20" fill="none" stroke="#23233c" stroke-width="1.800" stroke-linecap="round" stroke-linejoin="round"><line x1="2" y1="10" x2="18" y2="10" stroke-width="1.800"/><path d="M10 1.500V6.500M7.500 4.300 10 6.800 12.500 4.300M10 18.500V13.500M7.500 15.700 10 13.200 12.500 15.700" stroke-width="1.500"/></svg>
<div style="position:absolute;left:8.800px;top:132.9px;width:10.600px;height:10.600px;border-radius:2px;background:rgba(70,110,190,.13)"></div><svg class="pico" style="left:8.800px;margin-top:-.3px;top:133.2px" width="10.600" height="10.600" viewBox="0 0 20 20" fill="none" stroke="#23233c" stroke-width="1.800" stroke-linecap="round" stroke-linejoin="round"><g stroke-linecap="butt" stroke-width="2.500"><line x1="3.500" y1="5.500" x2="15.500" y2="5.500"/><line x1="3.500" y1="9.500" x2="15.500" y2="9.500"/><line x1="3.500" y1="13.500" x2="9.500" y2="13.500"/></g></svg>
<div style="position:absolute;left:8.800px;top:148.2px;width:10.600px;height:10.600px;border-radius:2px;background:rgba(70,110,190,.13)"></div><svg class="pico" style="left:8.800px;margin-top:-.3px;top:148.5px" width="10.600" height="10.600" viewBox="0 0 20 20" fill="none" stroke="#23233c" stroke-width="1.800" stroke-linecap="round" stroke-linejoin="round"><g stroke-linecap="butt" stroke-width="2.500"><line x1="7" y1="5.500" x2="16.500" y2="5.500"/><line x1="7" y1="10" x2="16.500" y2="10"/><line x1="7" y1="14.500" x2="16.500" y2="14.500"/><line x1="3.200" y1="5.500" x2="5.200" y2="5.500"/><line x1="3.200" y1="10" x2="5.200" y2="10"/><line x1="3.200" y1="14.500" x2="5.200" y2="14.500"/></g></svg>
<div style="position:absolute;left:8.800px;top:163.5px;width:10.600px;height:10.600px;border-radius:2px;background:rgba(70,110,190,.13)"></div><svg class="pico" style="left:8.800px;margin-top:-.3px;top:163.8px" width="10.600" height="10.600" viewBox="0 0 20 20" fill="none" stroke="#23233c" stroke-width="1.800" stroke-linecap="round" stroke-linejoin="round"><rect x="2.600" y="4" width="14.800" height="12" rx="2" stroke-width="1.500"/><path d="M2.600 8h14.800M2.600 12h14.800M10 4v12" stroke-width="1.300"/><rect x="3" y="4.400" width="14" height="3.400" fill="#23233c" stroke="none" opacity=".7"/></svg>
<div style="position:absolute;left:8.800px;top:178.6px;width:10.600px;height:10.600px;border-radius:2px;background:rgba(70,110,190,.13)"></div><svg class="pico" style="left:8.800px;margin-top:-.3px;top:178.9px" width="10.600" height="10.600" viewBox="0 0 20 20" fill="none" stroke="#23233c" stroke-width="1.800" stroke-linecap="round" stroke-linejoin="round"><g stroke-linecap="butt" stroke-width="2.500"><line x1="3.500" y1="5.500" x2="12" y2="5.500"/><line x1="6.500" y1="10" x2="16.500" y2="10"/><line x1="3.500" y1="14.500" x2="12" y2="14.500"/><line x1="3.500" y1="10" x2="5" y2="10"/></g></svg>
<svg class="pico" style="left:8.800px;margin-top:-.3px;top:200.8px" width="10.600" height="10.600" viewBox="0 0 20 20" fill="none" stroke="#23233c" stroke-width="1.800" stroke-linecap="round" stroke-linejoin="round"><line x1="4" y1="16" x2="16" y2="4" stroke-width="2.300"/></svg>
</div>
</div>
</body>
</html>
